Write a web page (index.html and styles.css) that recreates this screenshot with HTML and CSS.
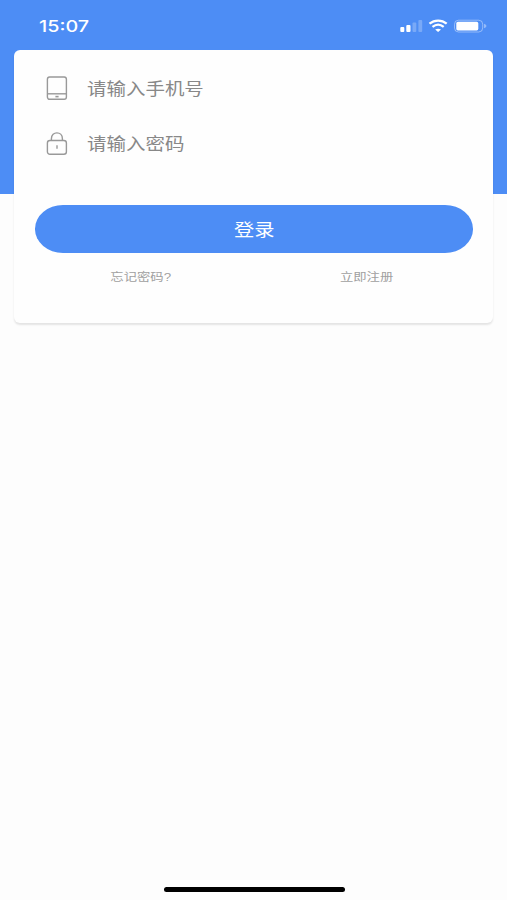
FILE: index.html
```html
<!DOCTYPE html>
<html lang="zh-CN">
<head>
<meta charset="utf-8">
<title>登录</title>
<link rel="stylesheet" href="styles.css">
</head>
<body>
<div class="screen">
  <header class="status">
    <span class="time"><span class="wide">15:07</span></span>
    <svg class="indicators" width="88" height="16" viewBox="0 0 88 16" fill="#fff">
      <rect x="0.3" y="9" width="4" height="5" rx="1"/>
      <rect x="6.3" y="7" width="4.2" height="7" rx="1"/>
      <rect x="12.5" y="4.5" width="3.8" height="9.5" rx="1" opacity=".25"/>
      <rect x="18.4" y="2" width="3.8" height="12" rx="1" opacity=".25"/>
      <g fill="none" stroke="#fff" stroke-width="2.3">
        <path d="M29.5 5.7C34.6 1.5 41.6 1.5 46.7 5.7"/>
        <path d="M32.5 8.9C36 6.1 40.2 6.1 43.7 8.9"/>
      </g>
      <path d="M35.2 11.6Q38.1 9.7 41 11.6L38.1 14.1Z"/>
      <rect x="54.5" y="2.2" width="28.2" height="11.8" rx="4" fill="none" stroke="#fff" opacity=".4"/>
      <rect x="56.3" y="3.8" width="22" height="8.6" rx="1.6"/>
      <path d="M84 5.8Q86.5 6.5 86.5 8T84 10.2Z" opacity=".4"/>
    </svg>
  </header>
  <main class="card">
    <div class="field">
      <svg class="icon" width="22" height="26" viewBox="0 0 22 26" fill="none" stroke="#999" stroke-width="1.4">
        <rect x="1.4" y="2" width="19" height="22.3" rx="2.2"/>
        <path d="M1.4 18.8H20.4"/>
        <path d="M9.4 21.6H12.6" stroke-width="1.6"/>
      </svg>
      <span class="wide">请输入手机号</span>
    </div>
    <div class="field">
      <svg class="icon" width="22" height="26" viewBox="0 0 22 26" fill="none" stroke="#999" stroke-width="1.4">
        <rect x="1.4" y="10.5" width="19" height="13.8" rx="2.5"/>
        <path d="M5.4 10.5V8.7C5.4 .9 16.4 .9 16.4 8.7V10.5M11 15.2V18.8"/>
      </svg>
      <span class="wide">请输入密码</span>
    </div>
    <div class="button"><span class="wide">登录</span></div>
    <nav class="links">
      <span class="link"><span class="wide">忘记密码?</span></span>
      <span class="link"><span class="wide">立即注册</span></span>
    </nav>
  </main>
  <div class="home"></div>
</div>
</body>
</html>
```
FILE: styles.css
```css
* { box-sizing: border-box; }
body {
  margin: 0;
  font-family: "Liberation Sans", "Noto Sans CJK SC", sans-serif;
}
.screen {
  height: 900px;
  display: flex;
  flex-direction: column;
  background: linear-gradient(#4d8df5 194.5px, #fdfdfd 194.5px);
}
.wide {
  display: inline-block;
  white-space: nowrap;
  transform: scaleX(1.18);
}
.status {
  height: 50px;
  padding: 1px 19.5px 0 39px;
  display: flex;
  align-items: center;
  justify-content: space-between;
  color: #fff;
}
.time {
  font: 500 16.2px/20px Inter, sans-serif;
}
.time .wide { transform: scaleX(1.22); }
.time .wide, .field .wide { transform-origin: left; }
.card {
  height: 273px;
  margin: 0 14px;
  padding: 10px 20.5px 0 21px;
  border-radius: 6px;
  background: #fefefe;
  box-shadow: 0 2px 2px rgba(0, 0, 0, .1);
}
.field {
  height: 55px;
  padding-left: 11px;
  display: flex;
  align-items: center;
  gap: 19px;
  color: #888;
  font-size: 16.5px;
}
.icon { flex: none; }
.button {
  height: 47.5px;
  margin-top: 35px;
  display: flex;
  align-items: center;
  justify-content: center;
  border-radius: 28px / 23.75px;
  background: #4d8df5;
  color: #fff;
  font-size: 17.2px;
}
.links {
  height: 48px;
  display: grid;
  grid-template-columns: 211px 1fr;
  color: #a0a0a0;
  font-size: 11.3px;
  line-height: 49px;
  text-align: center;
}
.links .link:last-child { padding-left: 14px; }
.home {
  width: 181px;
  height: 5px;
  margin: auto 0 8px 163.5px;
  border-radius: 3px;
  background: #000;
}
```
